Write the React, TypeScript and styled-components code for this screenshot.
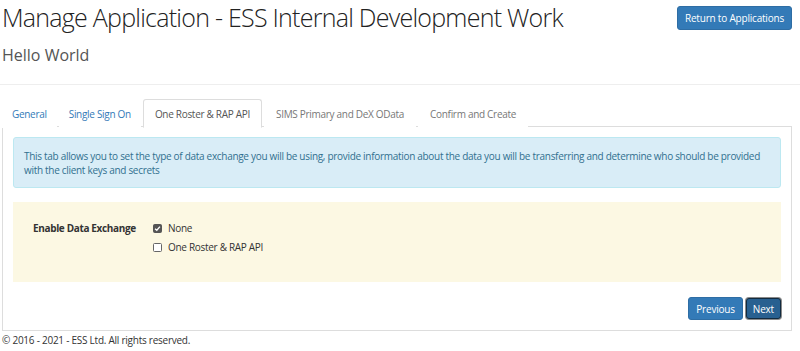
import React, { useState } from "react";
import styled, { createGlobalStyle } from "styled-components";

const GlobalStyle = createGlobalStyle`
  html, body {
    margin: 0;
    padding: 0;
    background: #fff;
    font-family: "Open Sans", "Noto Sans", sans-serif;
    color: #333;
  }
  * { box-sizing: border-box; }
`;

const Page = styled.div`
  padding: 0 8px 0 2px;
  width: 800px;
`;

const Header = styled.div`
  display: flex;
  justify-content: space-between;
  align-items: flex-start;
  height: 40px;
`;

const Title = styled.h1`
  margin: 0;
  font-weight: 300;
  font-size: 25px;
  line-height: 34px;
  color: #222;
  letter-spacing: -0.75px;
`;

const Button = styled.button<{ $pressed?: boolean }>`
  font-family: inherit;
  font-size: 10px;
  letter-spacing: -0.2px;
  color: #fff;
  background: ${(p) => (p.$pressed ? "#286090" : "#337ab7")};
  border: 1px solid ${(p) => (p.$pressed ? "#122b40" : "#2e6da4")};
  box-shadow: ${(p) => (p.$pressed ? "0 0 0 1px #8a8a8a" : "none")};
  border-radius: 3px;
  height: ${(p) => (p.$pressed ? "21px" : "23px")};
  padding: 0 ${(p) => (p.$pressed ? "6px" : "7px")};
  cursor: pointer;
`;

const ReturnButton = styled(Button)`
  margin-top: 6px;
  height: 24px;
  padding: 0 7px;
`;

const SubTitle = styled.h2`
  margin: 4px 0 0;
  font-weight: 400;
  font-size: 16px;
  line-height: 22px;
  color: #555;
`;

const Divider = styled.hr`
  margin: 18px -8px 14px -2px;
  border: 0;
  border-top: 1px solid #eee;
`;

const TabList = styled.ul`
  display: flex;
  list-style: none;
  margin: 0;
  padding: 0;
  border-bottom: 1px solid #ddd;
  height: 28px;
`;

const Tab = styled.li<{ $active?: boolean; $disabled?: boolean }>`
  margin-right: 2px;
  margin-bottom: -1px;
  padding: 0 ${(p) => (p.$active || p.$disabled ? "11px" : "9px")};
  height: 29px;
  display: flex;
  align-items: center;
  font-size: 10px;
  letter-spacing: -0.3px;
  white-space: nowrap;
  border: 1px solid ${(p) => (p.$active ? "#ddd" : "transparent")};
  border-bottom-color: ${(p) => (p.$active ? "#fff" : "transparent")};
  border-radius: 3px 3px 0 0;
  background: #fff;
  color: ${(p) => (p.$active ? "#555" : p.$disabled ? "#777" : "#337ab7")};
  cursor: ${(p) => (p.$disabled ? "not-allowed" : "pointer")};
`;

const Panel = styled.div`
  border: 1px solid #ddd;
  border-top: 0;
  padding: 10px;
`;

const InfoAlert = styled.div`
  background: #d9edf7;
  border: 1px solid #bce8f1;
  border-radius: 3px;
  color: #31708f;
  font-size: 10px;
  letter-spacing: -0.3px;
  line-height: 14px;
  padding: 11px 10px 10px;
`;

const Well = styled.div`
  margin-top: 14px;
  background: #fcf8e3;
  height: 80px;
  padding: 19px 20px;
  display: grid;
  grid-template-columns: 120px 1fr;
  align-items: start;
`;

const FieldLabel = styled.div`
  font-weight: 700;
  font-size: 10px;
  letter-spacing: -0.35px;
  line-height: 15px;
  color: #333;
`;

const Options = styled.div`
  display: flex;
  flex-direction: column;
  gap: 4px;
`;

const Option = styled.label`
  display: flex;
  align-items: center;
  gap: 6px;
  font-size: 10px;
  letter-spacing: -0.3px;
  line-height: 15px;
  color: #333;
`;

const Box = styled.span<{ $checked?: boolean }>`
  width: 9px;
  height: 9px;
  border-radius: 1.5px;
  border: 1px solid ${(p) => (p.$checked ? "#555" : "#666")};
  background: ${(p) => (p.$checked ? "#555" : "#fff")};
  display: inline-flex;
  align-items: center;
  justify-content: center;
`;

const Actions = styled.div`
  display: flex;
  justify-content: flex-end;
  align-items: center;
  gap: 3px;
  margin-top: 15px;
  height: 23px;
`;

const Footer = styled.footer`
  font-size: 10px;
  letter-spacing: -0.25px;
  line-height: 18px;
  color: #333;
`;

const tabs = [
  { label: "General" },
  { label: "Single Sign On" },
  { label: "One Roster & RAP API", active: true },
  { label: "SIMS Primary and DeX OData", disabled: true },
  { label: "Confirm and Create", disabled: true },
];

function Check({ checked }: { checked?: boolean }) {
  return (
    <Box $checked={checked}>
      {checked ? (
        <svg width="7" height="7" viewBox="0 0 8 8">
          <path d="M1.2 4.2 L3.2 6 L6.8 1.8" stroke="#fff" strokeWidth="1.5" fill="none" />
        </svg>
      ) : null}
    </Box>
  );
}

export default function App() {
  const [mode, setMode] = useState("none");
  return (
    <Page>
      <GlobalStyle />
      <Header>
        <Title>Manage Application - ESS Internal Development Work</Title>
        <ReturnButton>Return to Applications</ReturnButton>
      </Header>
      <SubTitle>Hello World</SubTitle>
      <Divider />
      <TabList>
        {tabs.map((t) => (
          <Tab key={t.label} $active={t.active} $disabled={t.disabled}>
            {t.label}
          </Tab>
        ))}
      </TabList>
      <Panel>
        <InfoAlert>
          This tab allows you to set the type of data exchange you will be using, provide
          information about the data you will be transferring and determine who should be
          provided with the client keys and secrets
        </InfoAlert>
        <Well>
          <FieldLabel>Enable Data Exchange</FieldLabel>
          <Options>
            <Option onClick={() => setMode("none")}>
              <Check checked={mode === "none"} />
              None
            </Option>
            <Option onClick={() => setMode("oneroster")}>
              <Check checked={mode === "oneroster"} />
              One Roster &amp; RAP API
            </Option>
          </Options>
        </Well>
        <Actions>
          <Button>Previous</Button>
          <Button $pressed>Next</Button>
        </Actions>
      </Panel>
      <Footer>© 2016 - 2021 - ESS Ltd. All rights reserved.</Footer>
    </Page>
  );
}
